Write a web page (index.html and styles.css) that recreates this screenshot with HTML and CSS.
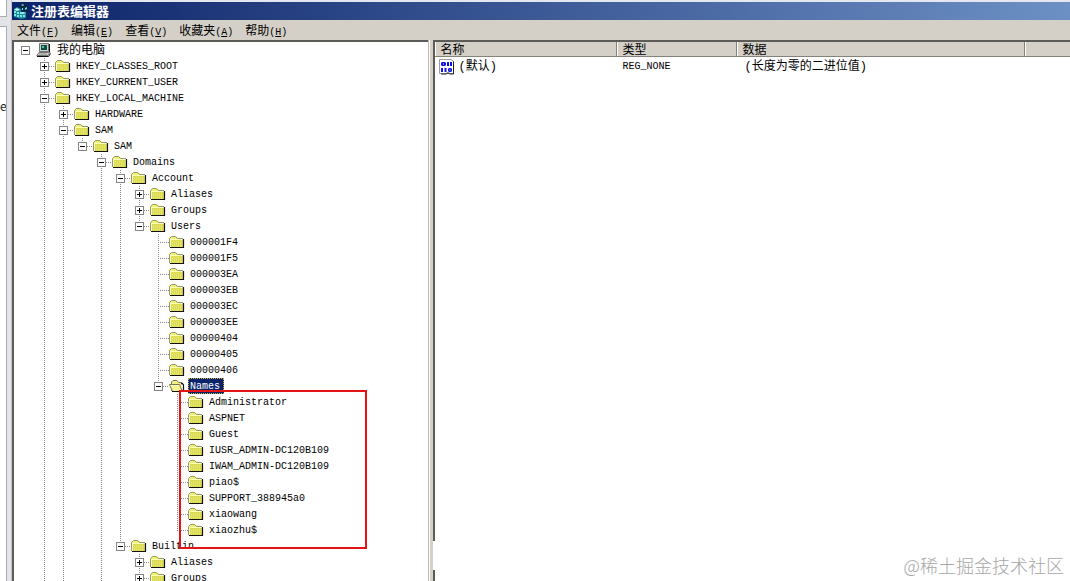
FILE: index.html
```html
<!DOCTYPE html>
<html lang="zh-CN">
<head>
<meta charset="utf-8">
<title>注册表编辑器</title>
<link rel="stylesheet" href="styles.css">
</head>
<body>
<svg class="sprites" aria-hidden="true">
  <symbol id="folder" viewBox="0 0 16 14">
    <path d="M1 4V3L3 1H7L9 3H14V12H1Z" fill="#f0f070"/>
    <path d="M2 5H14V12H2Z" fill="#dcdc54"/>
    <path d="M3 7H13M3 9H13M3 11H13" stroke="#ecec80" stroke-dasharray="1 1"/>
    <path d="M.5 12V3.500L2.500 1.500H6.500L8.500 3.500H14" fill="none" stroke="#96966a"/>
    <path d="M1.500 12V4.500H14" fill="none" stroke="#fcfcc0"/>
    <path d="M14.500 4V12.500H1" fill="none" stroke="#111" stroke-width="1.200"/>
  </symbol>
  <symbol id="folder-open" viewBox="0 0 16 14">
    <path d="M2.500 12V3L4 1.500H8L9.500 3.500H13V6" fill="#f0f08c" stroke="#777740"/>
    <path d="M.5 5.500H10.500L13.500 12.500H3.500Z" fill="#f4f490" stroke="#777740"/>
    <path d="M1.500 6.500H10" stroke="#ffffd8"/>
    <path d="M12 4.500H13.500L14.500 6V12.500H3" fill="none" stroke="#111" stroke-width="1.200"/>
  </symbol>
  <symbol id="computer" viewBox="0 0 16 14">
    <path d="M3.500 .5H12.500V8.500H3.500Z" fill="#d0d0ca" stroke="#777"/>
    <path d="M5 2H11V7H5Z" fill="#0b4e44"/>
    <path d="M6 3H8V5H6Z" fill="#55c6a5"/>
    <path d="M13.500 1V9.500" fill="none" stroke="#111"/>
    <path d="M3 9.500H14L12 12.500H.8Z" fill="#d8d8d0" stroke="#777"/>
    <path d="M3 11H11" stroke="#888"/>
    <path d="M1 13.500H12.500L14.500 10.500" fill="none" stroke="#111"/>
  </symbol>
  <symbol id="regedit" viewBox="0 0 16 16">
    <path d="M1 6L4 4L8 6V9L13 9V15L8 16L1 14Z" fill="#1c8d96"/>
    <path d="M1 6.500L4 5L7 6.500L4 8ZM7 10L10 9L13 10L10 11Z" fill="#b9f6f6"/>
    <path d="M1 8H3V10H1ZM4 9H6V11H4ZM1 11H3V13H1ZM4 12H6V14H4ZM7 12H9V14H7ZM10 12H12V14H10ZM7 9H9V11H7Z" fill="#7be8ea"/>
    <path d="M8 2L10 0L13 2V5L10 6L8 5ZM11 6L14 3L15 8L12 9Z" fill="#0a2a30"/>
    <path d="M8 2L10 1L11 2L10 3ZM12 5L14 4L14 6L12 7ZM9 5H10V7H9Z" fill="#6ce4e0"/>
  </symbol>
  <symbol id="binary" viewBox="0 0 16 16">
    <path d="M.5 .5H12L14.500 2.500V14.500H11L9 13.500L7 14.500H.5Z" fill="#fff" stroke="#9a9aa8"/>
    <path d="M14.500 2.500V15H11L9 14L7 15H2" fill="none" stroke="#222"/>
    <path d="M3 3H6L7 4V6L6 7H3L2 6V4ZM4 4.500V5.500H5V4.500ZM10 9H12L13 10V12L12 13H10L9 12V10ZM10.500 10.500V11.500H11.500V10.500Z" fill="#1010e0" fill-rule="evenodd"/>
    <path d="M9 3V7M12 3V7M3 9V13M6.500 9V13" stroke="#1010e0" stroke-width="2"/>
  </symbol>
</svg>

<div class="desktop">
  <aside class="behind"><div class="behind-top"></div><div class="behind-page"><span>e</span></div></aside>
  <main class="window">
    <header class="titlebar"><svg class="app-icon"><use href="#regedit"/></svg><h1>注册表编辑器</h1></header>
    <nav class="menubar">
      <button>文件<kbd>(<u>F</u>)</kbd></button><button>编辑<kbd>(<u>E</u>)</kbd></button><button>查看<kbd>(<u>V</u>)</kbd></button><button>收藏夹<kbd>(<u>A</u>)</kbd></button><button>帮助<kbd>(<u>H</u>)</kbd></button>
    </nav>
    <div class="panes">
      <section class="pane tree-pane">
        <div class="row root"><button class="toggle" aria-label="折叠"></button><i class="dash blank"></i><svg class="icon"><use href="#computer"/></svg><span class="label">我的电脑</span></div>
        <ul class="branch">
          <li><div class="row"><button class="toggle plus" aria-label="展开"></button><i class="dash"></i><svg class="icon"><use href="#folder"/></svg><span class="label">HKEY_CLASSES_ROOT</span></div></li>
          <li><div class="row"><button class="toggle plus" aria-label="展开"></button><i class="dash"></i><svg class="icon"><use href="#folder"/></svg><span class="label">HKEY_CURRENT_USER</span></div></li>
          <li class="more"><div class="row"><button class="toggle" aria-label="折叠"></button><i class="dash"></i><svg class="icon"><use href="#folder"/></svg><span class="label">HKEY_LOCAL_MACHINE</span></div>
            <ul class="branch">
              <li><div class="row"><button class="toggle plus" aria-label="展开"></button><i class="dash"></i><svg class="icon"><use href="#folder"/></svg><span class="label">HARDWARE</span></div></li>
              <li class="more"><div class="row"><button class="toggle" aria-label="折叠"></button><i class="dash"></i><svg class="icon"><use href="#folder"/></svg><span class="label">SAM</span></div>
                <ul class="branch">
                  <li><div class="row"><button class="toggle" aria-label="折叠"></button><i class="dash"></i><svg class="icon"><use href="#folder"/></svg><span class="label">SAM</span></div>
                    <ul class="branch">
                      <li class="more"><div class="row"><button class="toggle" aria-label="折叠"></button><i class="dash"></i><svg class="icon"><use href="#folder"/></svg><span class="label">Domains</span></div>
                        <ul class="branch">
                          <li><div class="row"><button class="toggle" aria-label="折叠"></button><i class="dash"></i><svg class="icon"><use href="#folder"/></svg><span class="label">Account</span></div>
                            <ul class="branch">
                              <li><div class="row"><button class="toggle plus" aria-label="展开"></button><i class="dash"></i><svg class="icon"><use href="#folder"/></svg><span class="label">Aliases</span></div></li>
                              <li><div class="row"><button class="toggle plus" aria-label="展开"></button><i class="dash"></i><svg class="icon"><use href="#folder"/></svg><span class="label">Groups</span></div></li>
                              <li><div class="row"><button class="toggle" aria-label="折叠"></button><i class="dash"></i><svg class="icon"><use href="#folder"/></svg><span class="label">Users</span></div>
                                <ul class="branch">
                                  <li><div class="row leaf"><i class="dash"></i><svg class="icon"><use href="#folder"/></svg><span class="label">000001F4</span></div></li>
                                  <li><div class="row leaf"><i class="dash"></i><svg class="icon"><use href="#folder"/></svg><span class="label">000001F5</span></div></li>
                                  <li><div class="row leaf"><i class="dash"></i><svg class="icon"><use href="#folder"/></svg><span class="label">000003EA</span></div></li>
                                  <li><div class="row leaf"><i class="dash"></i><svg class="icon"><use href="#folder"/></svg><span class="label">000003EB</span></div></li>
                                  <li><div class="row leaf"><i class="dash"></i><svg class="icon"><use href="#folder"/></svg><span class="label">000003EC</span></div></li>
                                  <li><div class="row leaf"><i class="dash"></i><svg class="icon"><use href="#folder"/></svg><span class="label">000003EE</span></div></li>
                                  <li><div class="row leaf"><i class="dash"></i><svg class="icon"><use href="#folder"/></svg><span class="label">00000404</span></div></li>
                                  <li><div class="row leaf"><i class="dash"></i><svg class="icon"><use href="#folder"/></svg><span class="label">00000405</span></div></li>
                                  <li><div class="row leaf"><i class="dash"></i><svg class="icon"><use href="#folder"/></svg><span class="label">00000406</span></div></li>
                                  <li><div class="row"><button class="toggle" aria-label="折叠"></button><i class="dash"></i><svg class="icon"><use href="#folder-open"/></svg><span class="label selected">Names</span></div>
                                    <ul class="branch marked">
                                      <li><div class="row leaf"><i class="dash"></i><svg class="icon"><use href="#folder"/></svg><span class="label">Administrator</span></div></li>
                                      <li><div class="row leaf"><i class="dash"></i><svg class="icon"><use href="#folder"/></svg><span class="label">ASPNET</span></div></li>
                                      <li><div class="row leaf"><i class="dash"></i><svg class="icon"><use href="#folder"/></svg><span class="label">Guest</span></div></li>
                                      <li><div class="row leaf"><i class="dash"></i><svg class="icon"><use href="#folder"/></svg><span class="label">IUSR_ADMIN-DC120B109</span></div></li>
                                      <li><div class="row leaf"><i class="dash"></i><svg class="icon"><use href="#folder"/></svg><span class="label">IWAM_ADMIN-DC120B109</span></div></li>
                                      <li><div class="row leaf"><i class="dash"></i><svg class="icon"><use href="#folder"/></svg><span class="label">piao$</span></div></li>
                                      <li><div class="row leaf"><i class="dash"></i><svg class="icon"><use href="#folder"/></svg><span class="label">SUPPORT_388945a0</span></div></li>
                                      <li><div class="row leaf"><i class="dash"></i><svg class="icon"><use href="#folder"/></svg><span class="label">xiaowang</span></div></li>
                                      <li><div class="row leaf"><i class="dash"></i><svg class="icon"><use href="#folder"/></svg><span class="label">xiaozhu$</span></div></li>
                                    </ul>
                                  </li>
                                </ul>
                              </li>
                            </ul>
                          </li>
                          <li><div class="row"><button class="toggle" aria-label="折叠"></button><i class="dash"></i><svg class="icon"><use href="#folder"/></svg><span class="label">Builtin</span></div>
                            <ul class="branch">
                              <li><div class="row"><button class="toggle plus" aria-label="展开"></button><i class="dash"></i><svg class="icon"><use href="#folder"/></svg><span class="label">Aliases</span></div></li>
                              <li class="more"><div class="row"><button class="toggle plus" aria-label="展开"></button><i class="dash"></i><svg class="icon"><use href="#folder"/></svg><span class="label">Groups</span></div></li>
                            </ul>
                          </li>
                        </ul>
                      </li>
                    </ul>
                  </li>
                </ul>
              </li>
            </ul>
          </li>
        </ul>
      </section>
      <div class="splitter"></div>
      <section class="pane list-pane">
        <table class="values">
          <colgroup><col class="c-name"><col class="c-type"><col class="c-data"><col></colgroup>
          <thead><tr><th>名称</th><th>类型</th><th>数据</th><th></th></tr></thead>
          <tbody><tr><td><div class="value-name"><svg class="value-icon"><use href="#binary"/></svg>(默认)</div></td><td>REG_NONE</td><td class="data">(长度为零的二进位值)</td><td></td></tr></tbody>
        </table>
      </section>
    </div>
  </main>
  <div class="edge-gap"></div>
  <div class="watermark">@稀土掘金技术社区</div>
</div>
</body>
</html>
```
FILE: styles.css
```css
*, *::after { box-sizing: border-box; }
body {
  margin: 0;
  color: #000;
  font: 12px/16px "Noto Sans CJK SC", sans-serif;
}
ul { list-style: none; margin: 0; padding: 0; }
button { border: 0; padding: 0; background: none; font: inherit; color: inherit; }
.sprites { position: absolute; width: 0; height: 0; }

.desktop {
  position: relative;
  display: flex;
  height: 100vh;
  overflow: hidden;
  background: #e4e8ee;
}
.behind { display: flex; flex-direction: column; gap: 9px; width: 12px; flex: none; background: #e2e4ea; border-right: 1px solid #c4c4c4; }
.behind-top { width: 7px; height: 17px; background: #fff; border: solid #a9abb0; border-width: 0 1px 1px 0; }
.behind-page {
  flex: 1;
  width: 7px;
  padding-top: 71px;
  background: #fff;
  border: solid #a9abb0;
  border-width: 1px 1px 0 0;
  color: #222;
  overflow: hidden;
}
.window { flex: 1; min-width: 0; display: flex; flex-direction: column; margin-top: 2px; background: #d4d0c8; }
.titlebar {
  display: flex;
  align-items: center;
  gap: 2px;
  height: 18px;
  padding-left: 1px;
  background: linear-gradient(90deg, #0c2369, #6c90c4);
  color: #fff;
}
.titlebar h1 { margin: 0; font-size: 13px; line-height: 18px; font-weight: 700; }
.app-icon { width: 16px; height: 16px; }
.menubar { display: flex; gap: 12px; height: 20px; padding-left: 5px; }
.menubar button { line-height: 20px; white-space: nowrap; }
.menubar kbd { font: 10px/20px "Liberation Mono", monospace; }

.panes { flex: 1; min-height: 0; display: flex; }
.pane {
  background: #fff;
  overflow: hidden;
  border: solid #5c5b58;
  border-width: 2px 0 0 2px;
}
.tree-pane { flex: none; width: calc(39% + 3px); padding-left: 7px; }
.splitter { width: 5px; flex: none; border-left: 1px solid #b8b5ae; background: #d4d0c8; box-shadow: inset 1px 0 #fff; }
.list-pane { flex: 1; min-width: 0; }

.branch { margin-left: 19px; }
.branch > li {
  background: repeating-linear-gradient(#8a8a8a 0 1px, transparent 1px 2px) 4px 0 / 1px 100% no-repeat;
}
.branch > li:last-child:not(.more) { background-size: 1px 8px; }
.row {
  display: flex;
  align-items: center;
  height: 16px;
  font-family: "Liberation Mono", "Noto Sans CJK SC", monospace;
  font-size: 10px;
  white-space: nowrap;
}
.toggle {
  width: 9px;
  height: 9px;
  border: 1px solid #858585;
  background: linear-gradient(#000, #000) center / 5px 1px no-repeat #fff;
}
.toggle.plus {
  background:
    linear-gradient(#000, #000) center / 5px 1px no-repeat,
    linear-gradient(#000, #000) center / 1px 5px no-repeat,
    #fff;
}
.dash { width: 6px; height: 1px; background: repeating-linear-gradient(90deg, #8a8a8a 0 1px, transparent 1px 2px); }
.dash.blank { background: none; }
.leaf .dash { width: 11px; margin-left: 4px; }
.icon { width: 16px; height: 14px; margin-right: 3px; }
.label { padding: 2px 2px 0; line-height: 14px; }
.root .label { font-size: 12px; }
.selected { background: #0a246a; color: #fff; outline: 1px dotted #d8b040; outline-offset: -1px; padding-right: 4px; }

.marked { position: relative; }
.marked::after {
  content: "";
  position: absolute;
  top: -4px;
  bottom: -11px;
  left: 6px;
  width: 188px;
  border: 2px solid #e51414;
}

.values { width: 100%; border-collapse: separate; border-spacing: 0; table-layout: fixed; }
.c-name { width: 182px; }
.c-type { width: 120px; }
.c-data { width: 288px; }
.values th, .values td { padding: 0 0 0 6px; text-align: left; font-weight: 400; }
.values th {
  height: 15px;
  line-height: 14px;
  background: #d4d0c8;
  border: solid #858279;
  border-width: 0 1px 1px 0;
  box-shadow: inset 1px 0 #fff;
}
.values th:last-child { border-right: 0; }
.values td { padding-top: 1px; line-height: 18px; font-family: "Liberation Mono", "Noto Sans CJK SC", monospace; white-space: nowrap; }
.values td:nth-child(2) { font-size: 10px; }
.values td:first-child { padding-left: 4px; }
.values .data { padding-left: 8px; }
.value-name { display: flex; align-items: center; gap: 4px; }
.value-icon { width: 16px; height: 16px; }

.edge-gap {
  position: absolute;
  left: 433px;
  bottom: 11px;
  width: 3px;
  height: 29px;
  background: #fff;
}
.watermark {
  position: absolute;
  right: 6px;
  bottom: 3px;
  color: #a6a6a6;
  font-size: 18px;
  font-weight: 300;
  line-height: 26px;
}
```
